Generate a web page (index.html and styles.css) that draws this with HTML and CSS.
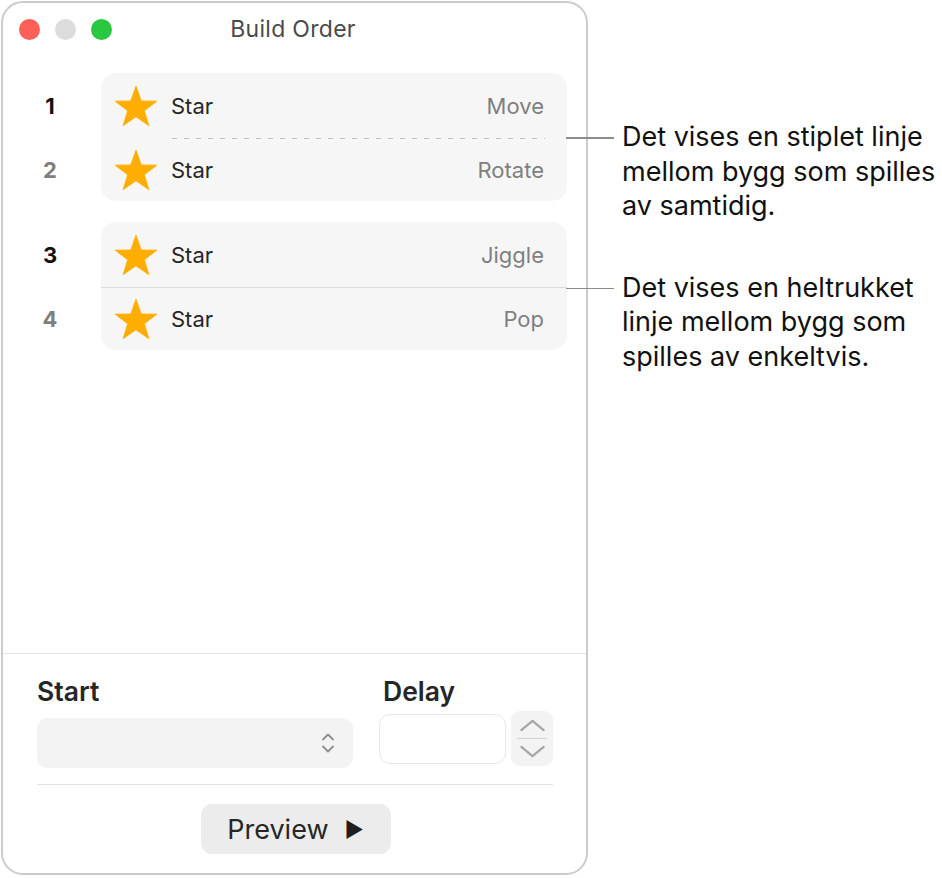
FILE: index.html
```html
<!DOCTYPE html>
<html lang="nb">
<head>
<meta charset="utf-8">
<title>Build Order</title>
<link rel="stylesheet" href="styles.css">
</head>
<body>
<div class="page">
  <div class="window">
    <div class="titlebar">
      <div class="lights">
        <span class="light red"></span>
        <span class="light grey"></span>
        <span class="light green"></span>
      </div>
      <div class="title">Build Order</div>
      <div></div>
    </div>

    <div class="list">
      <div class="group">
        <div class="nums">
          <div class="num r1 active">1</div>
          <div class="gap"></div>
          <div class="num r2">2</div>
        </div>
        <div class="card">
          <div class="row r1">
            <svg class="star" viewBox="0 0 42 40"><polygon points="21,0 26.17,14.88 41.92,15.2 29.37,24.72 33.93,39.8 21,30.8 8.07,39.8 12.63,24.72 0.08,15.2 15.83,14.88"/></svg>
            <span class="name">Star</span>
            <span class="effect">Move</span>
          </div>
          <div class="sep dashed"></div>
          <div class="row r2">
            <svg class="star" viewBox="0 0 42 40"><polygon points="21,0 26.17,14.88 41.92,15.2 29.37,24.72 33.93,39.8 21,30.8 8.07,39.8 12.63,24.72 0.08,15.2 15.83,14.88"/></svg>
            <span class="name">Star</span>
            <span class="effect">Rotate</span>
          </div>
        </div>
      </div>

      <div class="group">
        <div class="nums">
          <div class="num r1 active">3</div>
          <div class="gap"></div>
          <div class="num r2">4</div>
        </div>
        <div class="card">
          <div class="row r1">
            <svg class="star" viewBox="0 0 42 40"><polygon points="21,0 26.17,14.88 41.92,15.2 29.37,24.72 33.93,39.8 21,30.8 8.07,39.8 12.63,24.72 0.08,15.2 15.83,14.88"/></svg>
            <span class="name">Star</span>
            <span class="effect">Jiggle</span>
          </div>
          <div class="sep solid"></div>
          <div class="row r2">
            <svg class="star" viewBox="0 0 42 40"><polygon points="21,0 26.17,14.88 41.92,15.2 29.37,24.72 33.93,39.8 21,30.8 8.07,39.8 12.63,24.72 0.08,15.2 15.83,14.88"/></svg>
            <span class="name">Star</span>
            <span class="effect">Pop</span>
          </div>
        </div>
      </div>
    </div>

    <div class="bottom">
      <div class="fields">
        <div class="field-col">
          <div class="label">Start</div>
          <div class="popup">
            <svg class="updown" viewBox="0 0 14 24"><path d="M2 8.5 7 3.5 12 8.5M2 15.5 7 20.5 12 15.5"/></svg>
          </div>
        </div>
        <div class="field-col">
          <div class="label delay-label">Delay</div>
          <div class="delay-row">
            <div class="textbox"></div>
            <div class="stepper">
              <svg class="chev" viewBox="0 0 28 14"><path d="M2 12 14 2 26 12"/></svg>
              <div class="step-sep"></div>
              <svg class="chev" viewBox="0 0 28 14"><path d="M2 2 14 12 26 2"/></svg>
            </div>
          </div>
        </div>
      </div>
      <div class="bottom-sep"></div>
      <div class="actions">
        <button class="preview">Preview <span class="play">&#9654;</span></button>
      </div>
    </div>
  </div>

  <div class="notes">
    <p class="note note-dashed">Det vises en stiplet linje<br>mellom bygg som spilles<br>av samtidig.</p>
    <p class="note note-solid">Det vises en heltrukket<br>linje mellom bygg som<br>spilles av enkeltvis.</p>
  </div>
</div>
</body>
</html>
```

FILE: styles.css
```css
* { box-sizing: border-box; }

html, body {
  margin: 0;
  padding: 0;
  background: #ffffff;
}

body {
  font-family: Inter, "Noto Sans", "Liberation Sans", sans-serif;
  color: #262626;
}

.page {
  display: flex;
  align-items: flex-start;
  padding: 1px 0 0 1px;
}

/* ---------- window ---------- */
.window {
  width: 587px;
  height: 874px;
  border: 2px solid #cbcbcb;
  border-radius: 22px;
  background: #ffffff;
  display: flex;
  flex-direction: column;
  flex: none;
}

.titlebar {
  display: grid;
  grid-template-columns: 1fr auto 1fr;
  align-items: center;
  padding: 16px 16px 0 16px;
  height: 37px;
}

.lights {
  display: flex;
  gap: 15px;
}

.light {
  width: 21px;
  height: 21px;
  border-radius: 50%;
  display: block;
}
.light.red { background: #fe5f57; }
.light.grey { background: #dcdcdc; }
.light.green { background: #2ac840; }

.title {
  font-size: 23px;
  line-height: 21px;
  color: #4a4a4a;
  letter-spacing: 0.3px;
  margin-left: -3px;
}

/* ---------- list ---------- */
.list {
  flex: 1;
  padding: 33px 19px 0 0;
  display: flex;
  flex-direction: column;
  gap: 21px;
}

.group {
  display: grid;
  grid-template-columns: 98px 1fr;
}

.nums {
  display: flex;
  flex-direction: column;
}

.num {
  display: flex;
  align-items: center;
  justify-content: center;
  padding-right: 4px;
  font-size: 22px;
  font-weight: 700;
  color: #7e7e7e;
}
.num.active { color: #111111; }

.r1 { height: 65px; }
.r2 { height: 62px; }
.gap { height: 1px; }

.card {
  background: #f6f6f6;
  border-radius: 15px;
  display: flex;
  flex-direction: column;
}

.row {
  display: flex;
  align-items: center;
  padding: 0 23px 0 14px;
}

.star {
  width: 42px;
  height: 40px;
  flex: none;
  fill: #ffad00;
  stroke: #ffad00;
  stroke-width: 0.8;
  stroke-linejoin: round;
}

.name {
  margin-left: 14px;
  font-size: 22px;
  color: #262626;
}

.effect {
  margin-left: auto;
  font-size: 22px;
  color: #7f7f7f;
}

.sep { height: 1px; }
.sep.dashed {
  margin: 0 22px 0 71px;
  background: repeating-linear-gradient(90deg, #c2c2c2 0 5px, transparent 5px 12px);
}
.sep.solid {
  background: #dcdcdc;
}

/* ---------- bottom ---------- */
.bottom {
  border-top: 1px solid #e3e3e3;
  padding: 23px 33px 19px 34px;
}

.fields {
  display: grid;
  grid-template-columns: 316px 1fr;
  column-gap: 26px;
  align-items: start;
}

.label {
  font-size: 26.5px;
  font-weight: 600;
  line-height: 28px;
  color: #262626;
}
.delay-label { padding-left: 4px; }

.popup {
  margin-top: 13px;
  height: 50px;
  background: #f3f3f3;
  border-radius: 11px;
  display: flex;
  align-items: center;
  justify-content: flex-end;
  padding-right: 18px;
}

.updown {
  width: 14px;
  height: 24px;
  fill: none;
  stroke: #8e8e8e;
  stroke-width: 1.8;
  stroke-linecap: round;
  stroke-linejoin: round;
}

.delay-row {
  margin-top: 6px;
  display: flex;
  align-items: center;
  gap: 5px;
  height: 55px;
}

.textbox {
  width: 127px;
  height: 50px;
  border: 1.5px solid #e8e8e8;
  border-radius: 11px;
  background: #ffffff;
}

.stepper {
  width: 42px;
  height: 55px;
  background: #f3f3f3;
  border-radius: 9px;
  display: flex;
  flex-direction: column;
  align-items: center;
  justify-content: center;
  gap: 6px;
}

.chev {
  width: 27px;
  height: 13px;
  fill: none;
  stroke: #a6a6a6;
  stroke-width: 2.4;
  stroke-linecap: round;
  stroke-linejoin: round;
}

.step-sep {
  width: 30px;
  height: 1.5px;
  background: #d3d3d3;
}

.bottom-sep {
  margin-top: 16px;
  height: 1px;
  background: #e3e3e3;
}

.actions {
  margin-top: 19px;
  display: flex;
  justify-content: center;
}

.preview {
  width: 190px;
  height: 50px;
  border: none;
  border-radius: 11px;
  background: #ececec;
  font-family: Inter, "Noto Sans", "Liberation Sans", sans-serif;
  font-size: 27px;
  color: #262626;
  padding: 0;
  display: flex;
  align-items: center;
  justify-content: center;
  gap: 16px;
  margin-left: 1px;
}

.play {
  font-size: 21px;
  color: #1e1e1e;
}

/* ---------- callouts ---------- */
.notes {
  margin-left: 34px;
  padding-top: 119px;
  display: flex;
  flex-direction: column;
  gap: 47px;
}

.note {
  position: relative;
  margin: 0;
  font-size: 27px;
  line-height: 34.5px;
  color: #111111;
  white-space: nowrap;
}

.note::before {
  content: "";
  position: absolute;
  left: -56px;
  top: 17px;
  width: 48px;
  height: 1.5px;
  background: #8c8c8c;
}
```
